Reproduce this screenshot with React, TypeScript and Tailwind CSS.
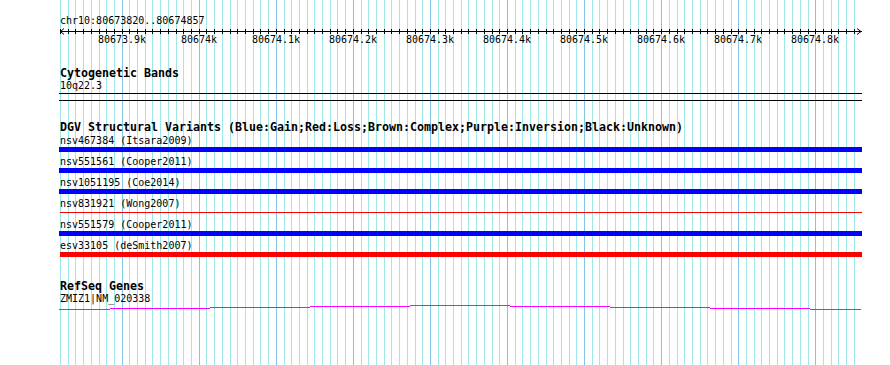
import React from "react";

const START = 80673820;
const END = 80674857;
const LEFT = 60;
const SCALE = 800 / (END - START + 1);

// tick / grid every 10bp, major every 100bp
const ticks = Array.from({ length: 104 }, (_, k) => {
  const bp = START + k * 10;
  return { x: Math.round(LEFT + (bp - START) * SCALE), major: bp % 100 === 0, bp };
});

const variants = [
  { id: "nsv467384", study: "Itsara2009", color: "blue" },
  { id: "nsv551561", study: "Cooper2011", color: "blue" },
  { id: "nsv1051195", study: "Coe2014", color: "blue" },
  { id: "nsv831921", study: "Wong2007", color: "thin" },
  { id: "nsv551579", study: "Cooper2011", color: "blue" },
  { id: "esv33105", study: "deSmith2007", color: "red" },
];

// gene intron line, stepped
const geneSteps = [
  [59, 110, 309],
  [110, 210, 308],
  [210, 310, 307],
  [310, 410, 306],
  [410, 510, 305],
  [510, 610, 306],
  [610, 710, 307],
  [710, 810, 308],
  [810, 861, 309],
];

function label(bp: number) {
  const k = bp / 1000;
  const s = k.toFixed(1);
  return (s.endsWith(".0") ? s.slice(0, -2) : s) + "k";
}

function Grid() {
  return (
    <svg className="absolute inset-0" width={890} height={365} shapeRendering="crispEdges">
      {ticks.map((t) => (
        <line
          key={t.bp}
          x1={t.x + 0.5}
          x2={t.x + 0.5}
          y1={0}
          y2={365}
          stroke={t.major ? "#80c4e6" : "#9ee8ea"}
          strokeWidth={1}
        />
      ))}
    </svg>
  );
}

function Ruler() {
  return (
    <svg width={803} height={21} shapeRendering="crispEdges" className="block">
      <line x1={1} x2={803} y1={4.5} y2={4.5} stroke="#000" />
      {ticks.map((t) => (
        <line key={t.bp} x1={t.x - 59 + 0.5} x2={t.x - 59 + 0.5} y1={2} y2={7} stroke="#000" />
      ))}
      <polyline points="5,1.5 1.5,4.5 5,7.5" fill="none" stroke="#000" shapeRendering="auto" />
      <polyline points="798,1.5 802,4.5 798,7.5" fill="none" stroke="#000" shapeRendering="auto" />
      {ticks
        .filter((t) => t.major)
        .map((t) => (
          <text
            key={t.bp}
            x={t.x - 59}
            y={16}
            textAnchor="middle"
            fontSize={10}
            fontFamily="'DejaVu Sans Mono', monospace"
            fill="#000"
          >
            {label(t.bp)}
          </text>
        ))}
    </svg>
  );
}

function GeneLine() {
  return (
    <svg width={803} height={6} shapeRendering="crispEdges" className="block">
      {geneSteps.map(([a, b, y]) => (
        <line key={a} x1={a - 59} x2={b - 59} y1={y - 304 + 0.5} y2={y - 304 + 0.5} stroke="#ff00ff" />
      ))}
    </svg>
  );
}

export default function App() {
  return (
    <div className="relative h-[365px] w-[890px] overflow-hidden bg-white font-['DejaVu_Sans_Mono',monospace] text-black">
      <Grid />
      <div className="relative flex flex-col pl-[59px]">
        {/* ruler */}
        <div className="h-[27px] pl-px pt-[14px] text-[10px] leading-[13px]">chr10:80673820..80674857</div>
        <Ruler />

        {/* cytogenetic bands */}
        <div className="mt-[19px] h-[12px] pl-px text-[11.63px] font-bold leading-[12px]">Cytogenetic Bands</div>
        <div className="h-[14px] pl-px text-[10px] leading-[13px]">10q22.3</div>
        <div className="h-[8px] w-[803px] border-y border-black" />

        {/* DGV */}
        <div className="mt-[20px] h-[13px] pl-px text-[11.63px] font-bold leading-[12px]">
          DGV Structural Variants (Blue:Gain;Red:Loss;Brown:Complex;Purple:Inversion;Black:Unknown)
        </div>
        <div className="flex flex-col gap-[3px]">
          {variants.map((v) => (
            <div key={v.id} className="flex flex-col">
              <div className="h-[13px] pl-px text-[10px] leading-[13px]">
                {v.id} ({v.study})
              </div>
              <div className="flex h-[5px] w-[803px] flex-col justify-center">
                {v.color === "blue" && <div className="h-[5px] w-[803px] bg-[#0000ff]" />}
                {v.color === "red" && <div className="ml-px h-[5px] w-[802px] bg-[#ff0000]" />}
                {v.color === "thin" && <div className="ml-px h-px w-[802px] bg-[#ff0000]" />}
              </div>
            </div>
          ))}
        </div>

        {/* RefSeq */}
        <div className="mt-[23px] h-[12px] pl-px text-[11.63px] font-bold leading-[12px]">RefSeq Genes</div>
        <div className="h-[12px] pl-px text-[10px] leading-[13px]">ZMIZ1|NM_020338</div>
        <GeneLine />
      </div>
    </div>
  );
}
